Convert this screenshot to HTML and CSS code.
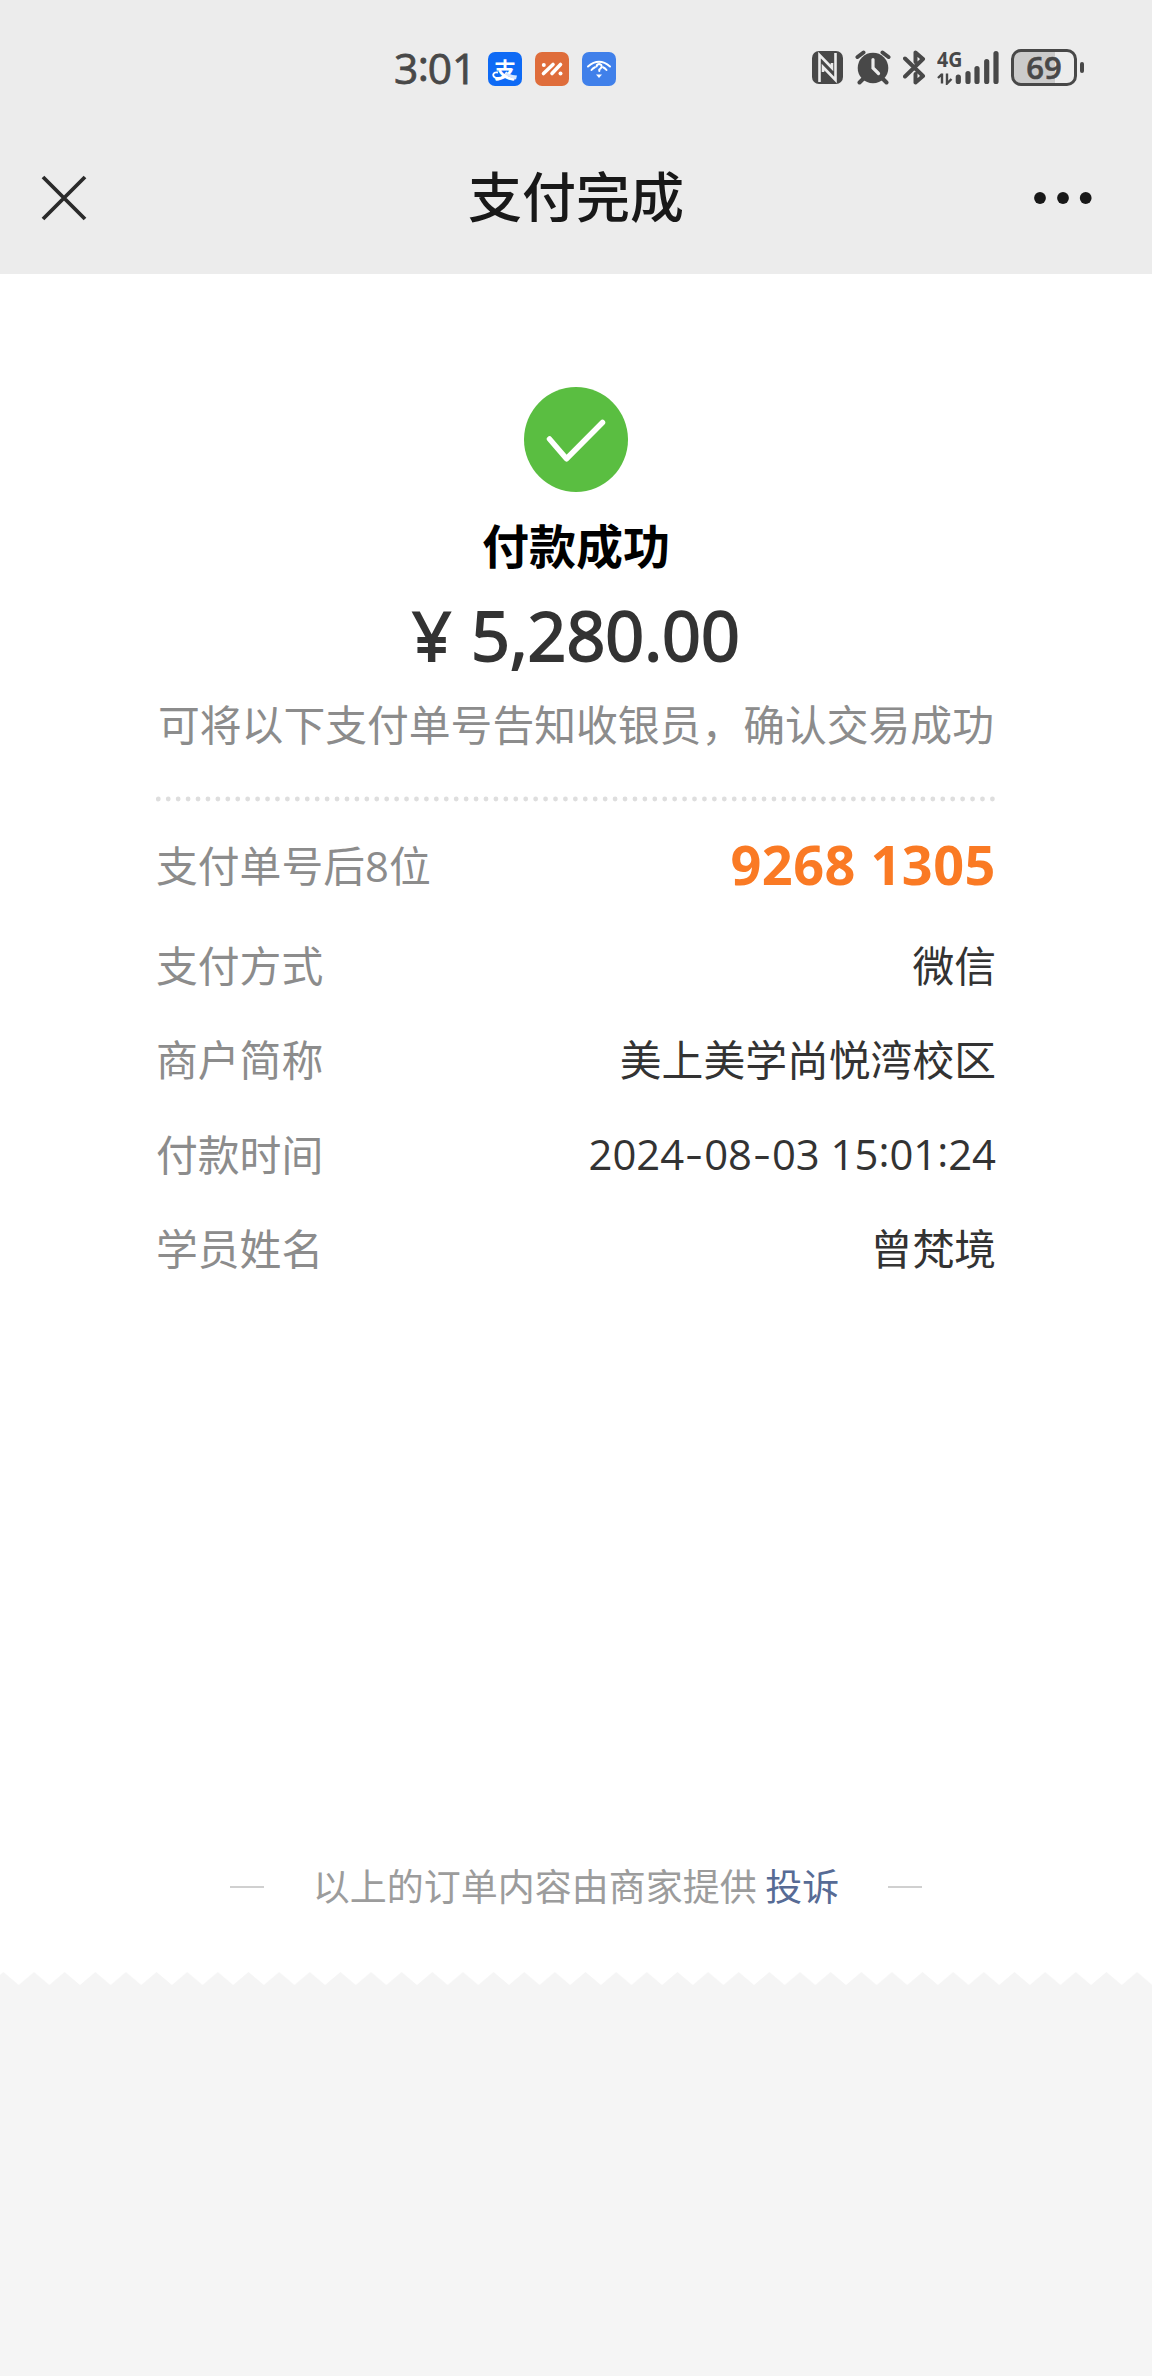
FILE: index.html
```html
<!DOCTYPE html>
<html lang="zh-CN">
<head>
<meta charset="utf-8">
<title>支付完成</title>
<link rel="stylesheet" href="styles.css">
</head>
<body>
<header class="top">
  <div class="status">
    <div class="status-left">
      <span class="clock">3<span class="colon">:</span>01</span>
      <span class="app app-pay">
        <span class="app-char">支</span>
        <svg class="app-tail" viewBox="0 0 34 34"><path d="M10 20.5C5 19.5 3.500 24 7.500 25.500C12 27 16.500 24 19 20" fill="none" stroke="#fff" stroke-width="1.800"/><path d="M18 20.500Q24 23.500 29 23.500L28 27.500Q22 26 17 22.500Z" fill="#d5e6ff"/></svg>
      </span>
      <svg class="app" viewBox="0 0 34 34"><rect width="34" height="34" rx="7" fill="#df6d3b"/><path d="M8.500 21.500L18 12.500M17 21.500L25.500 12.500" stroke="#fff" stroke-width="3.600" stroke-linecap="round"/><circle cx="8.800" cy="13" r="2" fill="#fff"/><circle cx="25.500" cy="21.500" r="2" fill="#fff"/></svg>
      <svg class="app" viewBox="0 0 34 34"><rect width="34" height="34" rx="7" fill="#4080ea"/><g fill="none" stroke="#fff" stroke-width="2" stroke-linecap="round"><path d="M6 14.500Q17 5 28 14.500"/><path d="M9.500 18Q11 16 13 15.200M24.500 18Q23 16 21 15.200"/><path d="M14.500 14.500Q15 12 17.200 12Q20 12.200 19.500 15Q19 16.500 17.300 17.500V19"/></g><path d="M14 22.500H20L17 26Z" fill="#fff"/></svg>
    </div>
    <div class="status-right">
      <svg width="31" height="33" viewBox="0 0 31 33"><rect width="31" height="33" rx="7" fill="#484848"/><path d="M7.500 31V4L20 17V12M23.500 2V29L11 16V21" fill="none" stroke="#ececec" stroke-width="2.600"/></svg>
      <svg class="alarm" width="36" height="35" viewBox="0 0 36 35"><g stroke="#484848" stroke-width="4" stroke-linecap="round"><path d="M2.500 7L8.500 2.500M33.500 7L27.500 2.500M8 29L4.500 32.500M28 29L31.500 32.500"/></g><circle cx="18" cy="18" r="15.300" fill="#484848"/><path d="M18 9.500V18L23.500 23.500" fill="none" stroke="#ececec" stroke-width="3.200" stroke-linecap="round"/></svg>
      <svg class="bluetooth" width="23" height="35" viewBox="0 0 23 35"><path d="M2 8.500L20 26L12.500 32.500V24M2 26.500L20 9L12.500 2.500V12" fill="none" stroke="#484848" stroke-width="4" stroke-linecap="round" stroke-linejoin="round"/></svg>
      <div class="signal">
        <span class="network">4G</span>
        <svg width="62" height="35" viewBox="0 0 62 35"><g stroke="#484848" stroke-width="5.200" stroke-linecap="round"><path d="M21.300 27V31.500M31 23.500V31.500M40 18.500V31.500M49.700 11.500V31.500M59 3.500V31.500"/></g><path d="M1 28L5 24M5 23.500V33.500M10 23.500V33.500L14.500 29" fill="none" stroke="#484848" stroke-width="2.400"/></svg>
      </div>
      <div class="battery"><span class="level">69</span></div>
      <span class="nub"></span>
    </div>
  </div>
  <nav class="nav">
    <svg width="46" height="46" viewBox="0 0 46 46"><path d="M2 2L44 44M44 2L2 44" stroke="#2a2a2a" stroke-width="3.800"/></svg>
    <h1 class="title">支付完成</h1>
    <svg width="58" height="12" viewBox="0 0 58 12" fill="#181818"><circle cx="6" cy="6" r="5.900"/><circle cx="29" cy="6" r="5.900"/><circle cx="51.700" cy="6" r="5.900"/></svg>
  </nav>
</header>
<main class="receipt">
  <svg class="check" viewBox="0 0 104 105"><ellipse cx="52" cy="52.500" rx="52" ry="52.500" fill="#5abe41"/><path d="M25.500 52L42.500 71.800L78.500 35.500" fill="none" stroke="#fff" stroke-width="5.500" stroke-linecap="round" stroke-linejoin="round"/></svg>
  <h2 class="success">付款成功</h2>
  <p class="amount"><span class="yen">¥</span><span>5,280.00</span></p>
  <p class="hint">可将以下支付单号告知收银员，确认交易成功</p>
  <svg class="dots" width="840" height="6" viewBox="0 0 840 6"><path d="M2.300 3H838" stroke="#dedede" stroke-width="4.800" stroke-linecap="round" stroke-dasharray="0 9.930"/></svg>
  <dl class="details">
    <div class="row row-code"><dt>支付单号后<span class="digit">8</span>位</dt><dd class="code">9268 1305</dd></div>
    <div class="row"><dt>支付方式</dt><dd>微信</dd></div>
    <div class="row"><dt>商户简称</dt><dd>美上美学尚悦湾校区</dd></div>
    <div class="row"><dt>付款时间</dt><dd class="time">2024<span class="dash">-</span>08<span class="dash">-</span>03 15<span class="colon">:</span>01<span class="colon">:</span>24</dd></div>
    <div class="row"><dt>学员姓名</dt><dd>曾梵境</dd></div>
  </dl>
  <footer class="source">
    <span class="rule"></span>
    <p class="source-text">以上的订单内容由商家提供 <a class="complain">投诉</a></p>
    <span class="rule"></span>
  </footer>
</main>
<svg class="edge" width="1152" height="14" viewBox="0 0 1152 14">
  <defs><pattern id="teeth" x="18.700" y="0" width="30.640" height="14" patternUnits="userSpaceOnUse"><path d="M0 14L15.320 1L30.640 14Z" fill="#f5f5f5"/></pattern></defs>
  <rect width="1152" height="14" fill="#fff"/><rect width="1152" height="14" fill="url(#teeth)"/>
</svg>
</body>
</html>
```
FILE: styles.css
```css
* { box-sizing: border-box; margin: 0; padding: 0; }

body {
  min-height: 2376px;
  background: #f5f5f5;
  font-family: "Noto Sans CJK SC", sans-serif;
  color: #333;
}

svg { display: block; flex: none; }

.top { height: 274px; background: #ececec; }

.status {
  display: flex;
  justify-content: space-between;
  height: 120px;
  padding: 49px 68px 0 394px;
  color: #484848;
}

.status-left { display: flex; gap: 13px; padding-top: 3px; }

.clock {
  width: 81px;
  margin-top: -1px;
  font: 400 42.500px/34px "Open Sans", sans-serif;
  -webkit-text-stroke: .8px currentColor;
  white-space: nowrap;
}

.colon { display: inline-block; transform: translateY(-3px); }
.clock .colon { width: 10px; margin-left: -.5px; }

.app { width: 34px; height: 34px; flex: none; }

.app-pay {
  position: relative;
  border-radius: 7px;
  background: #0e6af5;
  color: #fff;
  text-align: center;
}

.app-char { display: block; font-size: 22px; font-weight: 700; line-height: 32px; }
.app-tail { position: absolute; inset: 0; }

.status-right { display: flex; }
.status-right > svg:first-child { margin-top: 2px; }
.alarm { margin: 1px 0 0 12px; }
.bluetooth { margin: 1px 0 0 12px; }

.signal { position: relative; margin: 1px 0 0 11px; }

.network {
  position: absolute;
  left: 0;
  top: 0;
  font: 700 21px/19px "Open Sans", sans-serif;
  transform: scaleX(.93);
  transform-origin: left;
}

.battery {
  width: 66px;
  height: 37px;
  margin-left: 12px;
  border: 3px solid #484848;
  border-radius: 10px;
  background: linear-gradient(90deg, #cbcbcb 69%, #ececec 69%);
  text-align: center;
}

.level { display: block; font: 600 31px/30px "Open Sans", sans-serif; -webkit-text-stroke: .6px currentColor; }

.nub { width: 4px; height: 11px; margin: 13px 0 0 3px; border-radius: 2px; background: #484848; }

.nav {
  display: flex;
  align-items: flex-start;
  justify-content: space-between;
  height: 154px;
  padding: 55px 60px 0 41px;
}

.title { margin: -3px 0 0 31px; font-size: 54px; font-weight: 500; line-height: 46px; color: #181818; }
.nav svg:last-child { margin-top: 17px; }

.receipt {
  display: flex;
  flex-direction: column;
  align-items: center;
  height: 1697px;
  padding-top: 113px;
  background: #fff;
}

.check { width: 104px; height: 105px; }

.success { margin-top: 22px; font-size: 47px; font-weight: 700; line-height: 60px; color: #000; }

.amount {
  display: flex;
  gap: 20px;
  margin-top: 16px;
  font: 400 68px/90px "Open Sans", sans-serif;
  -webkit-text-stroke: 2px currentColor;
}

.hint { margin-top: 19px; font-size: 41.800px; line-height: 48px; color: #8c8c8c; white-space: nowrap; }

.dots { margin-top: 49px; }

.details { width: 840px; margin-top: 15px; }

.row {
  display: flex;
  justify-content: space-between;
  height: 94.500px;
  font-size: 41.800px;
  line-height: 94.500px;
}

.row-code { height: 99.500px; }
.row dt { color: #8c8c8c; }
.digit { font-family: "Open Sans", sans-serif; }
.code { font: 700 54px/94px "Open Sans", sans-serif; letter-spacing: .500px; color: #fa7a24; }
.time { padding-top: 1px; font-family: "Open Sans", sans-serif; }
.dash { display: inline-block; width: 20px; text-align: center; transform: scaleX(1.300) translateY(-1px); }

.source {
  display: flex;
  align-items: center;
  gap: 49px;
  margin-top: 565px;
}

.rule { width: 34px; height: 2px; margin-top: 5px; background: #d0d0d0; }
.source-text { font-size: 37px; line-height: 50px; color: #9c9c9c; white-space: nowrap; }
.complain { color: #576b95; }
```
